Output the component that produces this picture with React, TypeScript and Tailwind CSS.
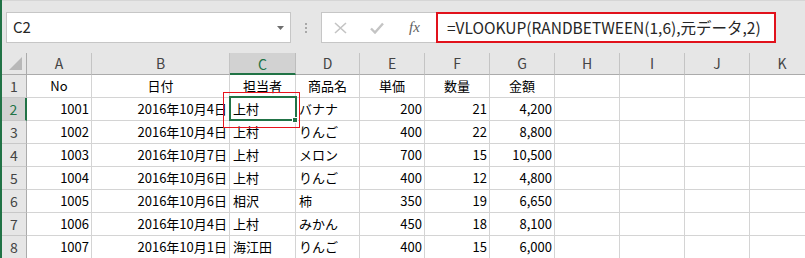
import type { ReactNode } from "react";

const cols = ["A", "B", "C", "D", "E", "F", "G", "H", "I", "J", "K"];

const headings = ["No", "日付", "担当者", "商品名", "単価", "数量", "金額"];

const rows = [
  ["1001", "2016年10月4日", "上村", "バナナ", "200", "21", "4,200"],
  ["1002", "2016年10月4日", "上村", "りんご", "400", "22", "8,800"],
  ["1003", "2016年10月7日", "上村", "メロン", "700", "15", "10,500"],
  ["1004", "2016年10月6日", "上村", "りんご", "400", "12", "4,800"],
  ["1005", "2016年10月6日", "相沢", "柿", "350", "19", "6,650"],
  ["1006", "2016年10月4日", "上村", "みかん", "450", "18", "8,100"],
  ["1007", "2016年10月1日", "海江田", "りんご", "400", "15", "6,000"],
];

// columns C and D hold text, the rest are numbers
const leftAligned = [false, false, true, true, false, false, false];

const font = "font-['Noto_Sans_CJK_JP',sans-serif]";

function Cell({ children, className = "" }: { children?: ReactNode; className?: string }) {
  return (
    <div className={`flex h-[23px] items-center overflow-visible whitespace-nowrap border-b border-r border-[#d4d4d4] bg-white text-[13px] text-black ${className}`}>
      {children}
    </div>
  );
}

function FormulaBar() {
  return (
    <div className="flex h-[53px] items-start border-t border-[#d6d6d6] pt-[11px] pl-[4px]">
      <div className="flex h-[31px] w-[285px] items-center justify-between border border-[#c6c6c6] bg-white pl-[6px] pr-[6px]">
        <span className="text-[15px] text-[#262626]">C2</span>
        <svg width="7" height="4" viewBox="0 0 7 4">
          <path d="M0 0h7L3.5 4z" fill="#6e6e6e" />
        </svg>
      </div>
      <div className="flex h-[31px] w-[30px] flex-col items-center justify-center gap-[2px]">
        <span className="h-[2px] w-[2px] bg-[#a8a8a8]" />
        <span className="h-[2px] w-[2px] bg-[#a8a8a8]" />
        <span className="h-[2px] w-[2px] bg-[#a8a8a8]" />
      </div>
      <div className="flex h-[31px] w-[455px]">
        <div className="flex w-[115px] items-center border border-r-0 border-[#c6c6c6] bg-white pl-[12px]">
          <svg width="13" height="12" viewBox="0 0 13 12">
            <path d="M1 1l11 10M12 1L1 11" stroke="#c4c4c4" strokeWidth="1.6" fill="none" />
          </svg>
          <svg className="ml-[23px]" width="14" height="12" viewBox="0 0 14 12">
            <path d="M1 6.5l4 4L13 1.5" stroke="#c4c4c4" strokeWidth="2.4" fill="none" />
          </svg>
          <span className="ml-[25px] font-['Liberation_Serif',serif] text-[15px] italic text-[#606060]">fx</span>
        </div>
        <div className="flex flex-1 items-center border-2 border-[#e1121c] bg-white pl-[9px] text-[15.5px] text-[#262626]">
          =VLOOKUP(RANDBETWEEN(1,6),元データ,2)
        </div>
      </div>
    </div>
  );
}

function Sheet() {
  return (
    <div className="grid grid-cols-[25px_65px_138px_66px_64px_65px_65px_65px_65px_65px_65px_65px]">
      {/* corner */}
      <div className="relative h-[22px] border-b border-r border-[#ababab] bg-[#e6e6e6]">
        <svg className="absolute right-[4px] bottom-[4px]" width="13" height="13" viewBox="0 0 13 13">
          <path d="M13 0v13H0z" fill="#b8b8b8" />
        </svg>
      </div>
      {cols.map((c) =>
        c === "C" ? (
          <div key={c} className="flex h-[22px] items-center justify-center border-b-2 border-r border-b-[#217346] border-r-[#bdbdbd] bg-[#d2d2d2] pt-[2px] text-[14px] text-[#217346]">
            {c}
          </div>
        ) : (
          <div key={c} className="flex h-[22px] items-center justify-center border-b border-r border-b-[#ababab] border-r-[#c4c4c4] bg-[#e6e6e6] text-[14px] text-[#444]">
            {c}
          </div>
        )
      )}

      {/* row 1: headings */}
      <div className="flex h-[23px] items-center justify-center border-b border-r border-b-[#c8c8c8] border-r-[#ababab] bg-[#e6e6e6] text-[14px] text-[#444]">1</div>
      {headings.map((h) => (
        <Cell key={h} className="justify-center border-[#c6e0b4] bg-[#c6e0b4]">
          {h}
        </Cell>
      ))}
      {["H", "I", "J", "K"].map((c) => (
        <Cell key={c} />
      ))}

      {rows.map((row, i) => {
        const selected = i === 0;
        return [
          <div
            key={`h${i}`}
            className={
              selected
                ? "flex h-[23px] items-center justify-center border-b border-r-2 border-b-[#c8c8c8] border-r-[#217346] bg-[#d2d2d2] text-[14px] text-[#217346]"
                : "flex h-[23px] items-center justify-center border-b border-r border-b-[#c8c8c8] border-r-[#ababab] bg-[#e6e6e6] text-[14px] text-[#444]"
            }
          >
            {i + 2}
          </div>,
          ...row.map((v, j) => {
            const active = selected && j === 2;
            return (
              <Cell
                key={`${i}-${j}`}
                className={`${active ? "relative z-10" : ""} ${leftAligned[j] ? "justify-start pl-[3px]" : "justify-end pr-[2px]"}`}
              >
                {v}
                {active && (
                  <>
                    <span className="pointer-events-none absolute -top-[2px] -left-[1px] -bottom-[1px] -right-[2px] border-2 border-[#217346]" />
                    <span className="pointer-events-none absolute -right-[3px] -bottom-[3px] h-[6px] w-[6px] border border-white bg-[#217346]" />
                    <span className="pointer-events-none absolute -top-[6px] -left-[7px] -bottom-[8px] -right-[5px] border-[1.5px] border-[#e8141d]" />
                  </>
                )}
              </Cell>
            );
          }),
          ...["H", "I", "J", "K"].map((c) => <Cell key={`${i}${c}`} />),
        ];
      })}
    </div>
  );
}

export default function App() {
  return (
    <div className={`h-[258px] w-[805px] overflow-hidden border-l-2 border-[#217346] bg-[#e6e6e6] ${font}`}>
      <FormulaBar />
      <Sheet />
    </div>
  );
}
